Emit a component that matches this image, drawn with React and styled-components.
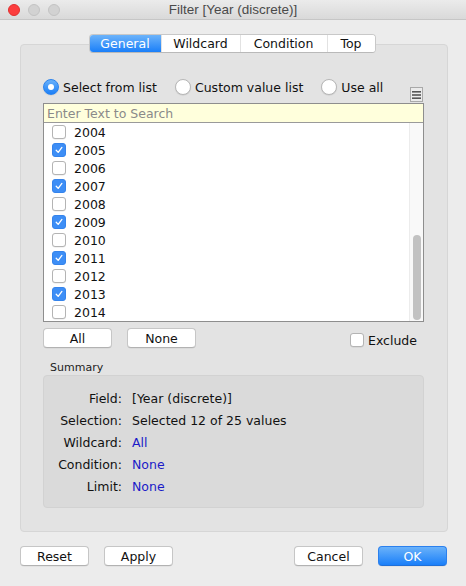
import React from 'react';
import styled, { createGlobalStyle } from 'styled-components';

const GlobalStyle = createGlobalStyle`
  html, body {
    margin: 0;
    padding: 0;
    background: #ececec;
  }
  body {
    font-family: "DejaVu Sans", "Liberation Sans", sans-serif;
    font-size: 12.5px;
    color: #111;
  }
`;

const Window = styled.div`
  width: 466px;
  height: 586px;
  display: flex;
  flex-direction: column;
  background: #ececec;
  overflow: hidden;
`;

const TitleBar = styled.div`
  height: 19px;
  flex: none;
  display: grid;
  grid-template-columns: 1fr auto 1fr;
  align-items: center;
  background: linear-gradient(#ebebeb, #d9d9d9);
  border-bottom: 1px solid #c6c6c6;
`;

const Lights = styled.div`
  display: flex;
  gap: 8px;
  padding-left: 8px;
`;

const Light = styled.span`
  width: 12px;
  height: 12px;
  border-radius: 50%;
  box-sizing: border-box;
  background: ${p => (p.red ? '#fc3d3d' : '#d2d2d2')};
  border: 1px solid ${p => (p.red ? '#e0302f' : '#c3c3c3')};
`;

const Title = styled.div`
  font-family: "Liberation Sans", sans-serif;
  font-size: 13.5px;
  color: #4a4a4a;
`;

const Body = styled.div`
  flex: 1;
  display: flex;
  flex-direction: column;
  padding: 14px 18px 0 20px;
`;

const Tabs = styled.div`
  align-self: center;
  margin-left: -4px;
  margin-bottom: -9px;
  position: relative;
  z-index: 1;
  display: flex;
  height: 19px;
  background: #fff;
  border: 1px solid #c8c8c8;
  border-bottom-color: #b9b9b9;
  border-radius: 4px;
  overflow: hidden;
  box-sizing: border-box;
`;

const Tab = styled.div`
  width: ${p => p.w}px;
  display: flex;
  align-items: center;
  justify-content: center;
  font-size: 12.5px;
  color: ${p => (p.active ? '#fff' : '#111')};
  background: ${p => (p.active ? 'linear-gradient(#6cb3fa, #1a7ff9)' : '#fff')};
  border-left: ${p => (p.first ? 'none' : '1px solid #e2e2e2')};
`;

const Panel = styled.div`
  height: 488px;
  box-sizing: border-box;
  background: #e3e3e3;
  border: 1px solid #d6d6d6;
  border-radius: 4px;
  padding: 34px 23px 0 22px;
  display: flex;
  flex-direction: column;
`;

const RadioRow = styled.div`
  height: 24px;
  display: flex;
  align-items: flex-start;
  gap: 18px;
`;

const RadioOption = styled.label`
  display: flex;
  align-items: center;
  gap: 4px;
  height: 16px;
  white-space: nowrap;
`;

const RadioDot = styled.span`
  width: 16px;
  height: 16px;
  box-sizing: border-box;
  border-radius: 50%;
  display: flex;
  align-items: center;
  justify-content: center;
  background: ${p => (p.on ? 'linear-gradient(#69b1fa, #1b7ff7)' : '#fff')};
  border: 1px solid ${p => (p.on ? '#2a83ee' : '#b7b7b7')};
  box-shadow: 0 0.5px 1px rgba(0, 0, 0, 0.12);

  &::after {
    content: '';
    display: ${p => (p.on ? 'block' : 'none')};
    width: 6px;
    height: 6px;
    border-radius: 50%;
    background: #fff;
  }
`;

const MenuButton = styled.div`
  margin-left: auto;
  margin-right: 1px;
  margin-bottom: 1px;
  align-self: flex-end;
  width: 13px;
  height: 15px;
  box-sizing: border-box;
  border: 1px solid #a9a9a9;
  background: #ebebeb;
  display: flex;
  align-items: center;
  justify-content: center;
`;

const ListBox = styled.div`
  border: 1px solid #8e8e8e;
  background: #fff;
  display: flex;
  flex-direction: column;
`;

const Search = styled.div`
  height: 18px;
  border-bottom: 1px solid #9a9a9a;
  background: #ffffdc;
  color: #8a8a8a;
  padding-left: 3px;
  display: flex;
  align-items: center;
`;

const ListArea = styled.div`
  display: flex;
  height: 198px;
`;

const Rows = styled.div`
  flex: 1;
  display: flex;
  flex-direction: column;
`;

const Row = styled.div`
  height: 18px;
  display: flex;
  align-items: center;
  gap: 8px;
  padding-left: 8px;
`;

const Check = styled.span`
  width: 14px;
  height: 14px;
  box-sizing: border-box;
  border-radius: 3px;
  flex: none;
  display: flex;
  align-items: center;
  justify-content: center;
  background: ${p => (p.on ? '#3d8ef6' : '#fff')};
  border: 1px solid ${p => (p.on ? '#3584ec' : '#b4b4b4')};
  box-shadow: ${p => (p.on ? 'none' : '0 0.5px 0.5px rgba(0,0,0,0.1)')};
`;

const Track = styled.div`
  width: 14px;
  background: #f9f9f9;
  border-left: 1px solid #ececec;
  padding-top: ${p => p.offset}px;
  box-sizing: border-box;
  display: flex;
  justify-content: center;
`;

const Thumb = styled.div`
  width: 8px;
  height: ${p => p.size}px;
  border-radius: 4px;
  background: #c2c2c2;
`;

const ButtonRow = styled.div`
  margin-top: 6px;
  display: flex;
  align-items: center;
  gap: 15px;
`;

const Button = styled.button`
  width: 69px;
  height: 20px;
  padding: 0;
  box-sizing: border-box;
  border-radius: 4px;
  font-family: inherit;
  font-size: 12.5px;
  color: ${p => (p.primary ? '#fff' : '#111')};
  background: ${p => (p.primary ? 'linear-gradient(#6ab2fa, #1a7ff9)' : '#fff')};
  border: 1px solid ${p => (p.primary ? '#2b80ee' : '#c6c6c6')};
  border-bottom-color: ${p => (p.primary ? '#1f6fd8' : '#b2b2b2')};
  box-shadow: 0 0.5px 0.5px rgba(0, 0, 0, 0.08);
`;

const ExcludeOption = styled.label`
  margin-left: auto;
  margin-right: 7px;
  margin-top: 4px;
  display: flex;
  align-items: center;
  gap: 4px;
`;

const SummaryLabel = styled.div`
  margin-top: 14px;
  padding-left: 7px;
  font-size: 11px;
  line-height: 12px;
  color: #222;
`;

const SummaryBox = styled.div`
  margin-top: 1px;
  height: 133px;
  box-sizing: border-box;
  background: #dadada;
  border: 1px solid #d2d2d2;
  border-radius: 4px;
  padding-top: 11px;
  display: grid;
  grid-template-columns: 78px 1fr;
  grid-auto-rows: 22px;
  column-gap: 10px;
  align-content: start;
  align-items: center;
`;

const Key = styled.div`
  text-align: right;
  color: #111;
`;

const Value = styled.div`
  color: ${p => (p.link ? '#1a1ac8' : '#111')};
`;

const Footer = styled.div`
  margin-top: 14px;
  margin-right: 1px;
  display: flex;
  gap: 15px;
`;

const Spacer = styled.div`
  flex: 1;
`;

const CheckMark = () => (
  <svg width="10" height="10" viewBox="0 0 10 10">
    <path d="M2.2 5.2 L4.2 7.4 L7.9 2.4" fill="none" stroke="#fff" strokeWidth="1.3" strokeLinecap="round" strokeLinejoin="round" />
  </svg>
);

const MenuIcon = () => (
  <svg width="9" height="8" viewBox="0 0 9 8">
    <rect x="0" y="0" width="9" height="1.6" fill="#555" />
    <rect x="0" y="3.2" width="9" height="1.6" fill="#555" />
    <rect x="0" y="6.4" width="9" height="1.6" fill="#555" />
  </svg>
);

const years = [
  [2004, false], [2005, true], [2006, false], [2007, true], [2008, false], [2009, true],
  [2010, false], [2011, true], [2012, false], [2013, true], [2014, false],
];

const summary = [
  ['Field:', '[Year (discrete)]', false],
  ['Selection:', 'Selected 12 of 25 values', false],
  ['Wildcard:', 'All', true],
  ['Condition:', 'None', true],
  ['Limit:', 'None', true],
];

const App = () => {
  return (
    <Window>
      <GlobalStyle />
      <TitleBar>
        <Lights>
          <Light red />
          <Light />
          <Light />
        </Lights>
        <Title>Filter [Year (discrete)]</Title>
        <div />
      </TitleBar>
      <Body>
        <Tabs>
          <Tab first active w={71}>General</Tab>
          <Tab w={78}>Wildcard</Tab>
          <Tab w={86}>Condition</Tab>
          <Tab w={47}>Top</Tab>
        </Tabs>
        <Panel>
          <RadioRow>
            <RadioOption><RadioDot on />Select from list</RadioOption>
            <RadioOption><RadioDot />Custom value list</RadioOption>
            <RadioOption><RadioDot />Use all</RadioOption>
            <MenuButton><MenuIcon /></MenuButton>
          </RadioRow>
          <ListBox>
            <Search>Enter Text to Search</Search>
            <ListArea>
              <Rows>
                {years.map(([year, on]) => (
                  <Row key={year}>
                    <Check on={on}>{on && <CheckMark />}</Check>
                    {year}
                  </Row>
                ))}
              </Rows>
              <Track offset={112}>
                <Thumb size={85} />
              </Track>
            </ListArea>
          </ListBox>
          <ButtonRow>
            <Button>All</Button>
            <Button>None</Button>
            <ExcludeOption><Check />Exclude</ExcludeOption>
          </ButtonRow>
          <SummaryLabel>Summary</SummaryLabel>
          <SummaryBox>
            {summary.map(([k, v, link]) => (
              <React.Fragment key={k}>
                <Key>{k}</Key>
                <Value link={link}>{v}</Value>
              </React.Fragment>
            ))}
          </SummaryBox>
        </Panel>
        <Footer>
          <Button>Reset</Button>
          <Button>Apply</Button>
          <Spacer />
          <Button>Cancel</Button>
          <Button primary>OK</Button>
        </Footer>
      </Body>
    </Window>
  );
};

export default App;
